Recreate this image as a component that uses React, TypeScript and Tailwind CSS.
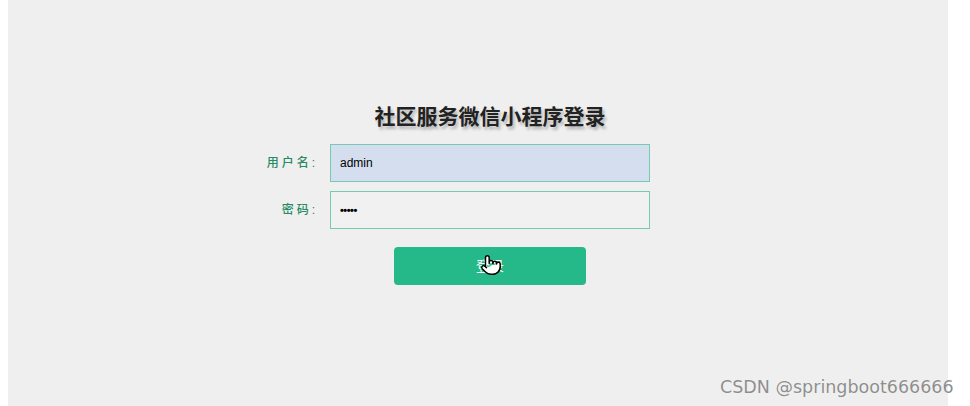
import React from 'react';
import { Pointer } from 'lucide-react';

const font = '"Liberation Sans", Arial, "Noto Sans CJK SC", sans-serif';

export default function App() {
  return (
    <div className="relative h-[406px] w-[970px] overflow-hidden bg-white" style={{ fontFamily: font }}>
      <div className="ml-[8px] flex h-full w-[940px] flex-col items-center bg-[#efefef] pt-[104px]">
        <h1
          className="pl-[24px] text-[21px] font-bold leading-[26px] text-[#222]"
          style={{ textShadow: '2px 3px 3px rgba(0,0,0,0.25)' }}
        >
          社区服务微信小程序登录
        </h1>

        {/* login form */}
        <form className="mt-[14px] flex flex-col gap-[9px] pr-[42px]">
          <div className="flex items-center">
            <label className="w-[66px] pr-[12px] text-right text-[12px] font-medium tracking-[3px] text-[#268a62]">用户名:</label>
            <input
              defaultValue="admin"
              className="h-[38px] w-[320px] border border-[#74cbb2] bg-[#d4deef] px-[9px] text-[12px] text-black outline-none"
            />
          </div>
          <div className="flex items-center">
            <label className="w-[66px] pr-[12px] text-right text-[12px] font-medium tracking-[3px] text-[#268a62]">密码:</label>
            <input
              type="password"
              defaultValue="admin"
              className="h-[38px] w-[320px] border border-[#74cbb2] bg-[#f1f1f1] px-[9px] text-[11px] font-bold tracking-[-0.5px] text-black outline-none"
            />
          </div>
          <div className="mt-[9px] flex pl-[130px]">
            <button
              type="button"
              className="relative h-[38px] w-[192px] rounded-[4px] bg-[#25b888] text-[14px] text-white"
            >
              登录
              <Pointer
                size={22}
                strokeWidth={1.6}
                className="absolute left-[86px] top-[7px] fill-white text-black"
              />
            </button>
          </div>
        </form>
      </div>

      <div
        className="absolute left-[720px] top-[374px] text-[17.5px] text-[#8e8e8e]"
        style={{ fontFamily: '"DejaVu Sans", sans-serif', textShadow: '0 0 1px #fff' }}
      >
        CSDN @springboot666666
      </div>
    </div>
  );
}
